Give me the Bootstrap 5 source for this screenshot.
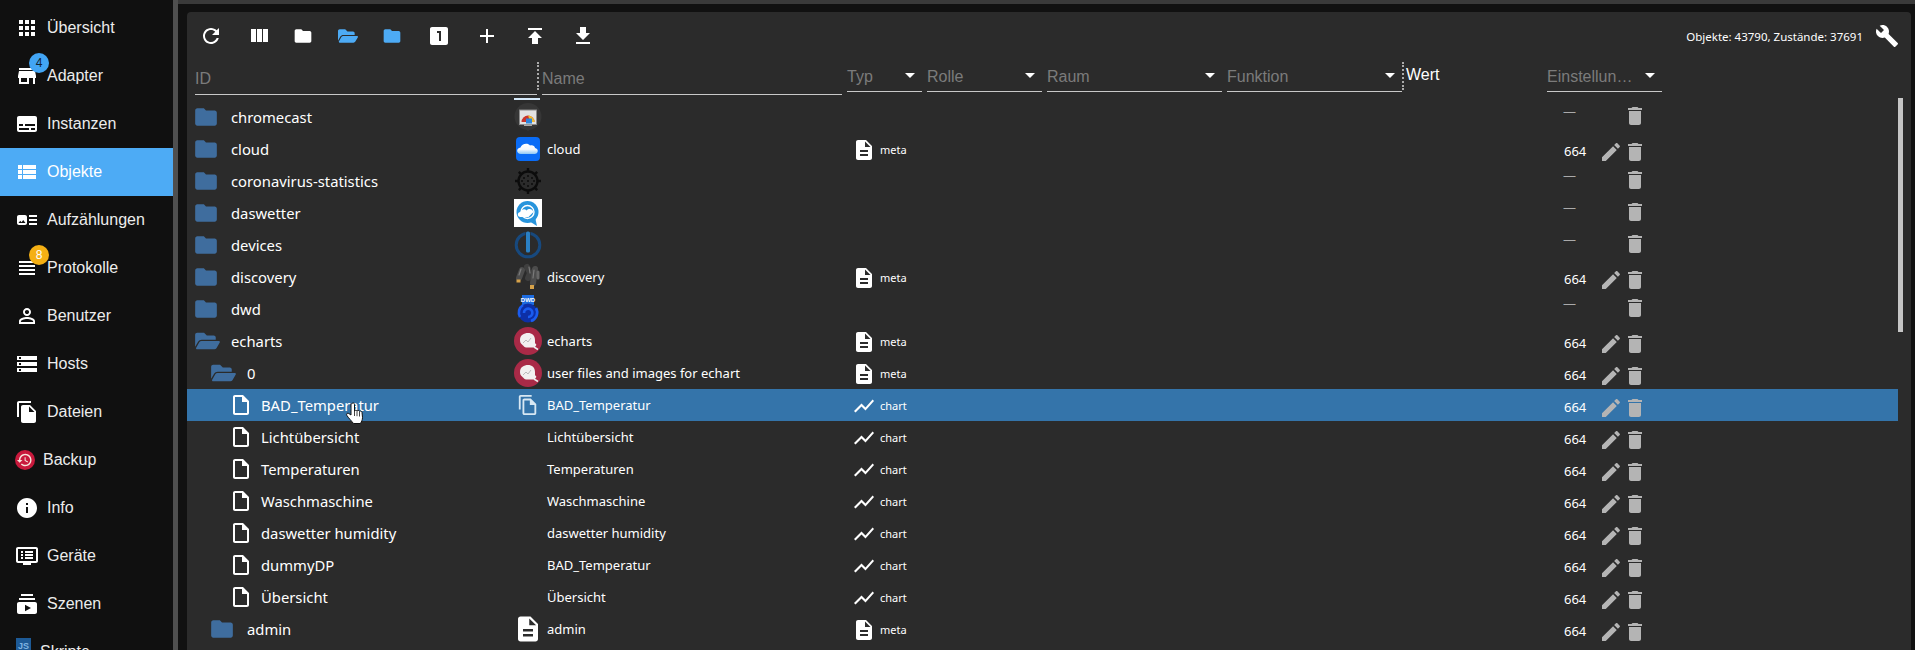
<!DOCTYPE html>
<html lang="de">
<head>
<meta charset="utf-8">
<title>Objekte</title>
<link href="https://cdn.jsdelivr.net/npm/bootstrap@5.3.0/dist/css/bootstrap.min.css" rel="stylesheet">
<style>
html,body{height:650px;overflow:hidden;background:#111;margin:0}
svg{fill:currentColor;flex:none;display:block}
.shell{height:650px;width:1915px;overflow:hidden}
.side{width:173px;flex:none;background:#101010;padding-top:4px;height:650px;overflow:hidden}
.divider{width:5px;flex:none;background:#4f4f4f}
.side-item{height:48px;flex:none;padding:0 0 0 15px;color:#ececec;font:16px "Liberation Sans",Arial,sans-serif;position:relative}
.side-item:hover{color:#ececec}
.side-item svg{width:24px;height:24px;color:#fff;margin-right:8px}
.side-item.active-item{background:#4dabf5;color:#fff}
.side-item.bk svg{width:20px;height:20px;margin:0 8px 0 0}
.side-item.js svg{margin-left:1px;width:15px;height:24px;margin-right:9px;margin-top:-4px}
.pill{position:absolute;left:29px;top:1px;width:20px;height:20px;border-radius:50%;font:12px "Liberation Sans",Arial,sans-serif;display:flex;align-items:center;justify-content:center}
.pill-blue{background:#42a5f5;color:#123}
.pill-amber{background:#f5b014;color:#fff}
.work{flex:1;min-width:0;background:#111}
.topbar{height:4px;background:#3a3a3a}
.sheet{margin:8px 4px 0 9px;background:#2b2b2b;border-radius:4px 4px 0 0;height:638px;overflow:hidden}
.tools{height:48px;color:#fff}
.tbtn{width:48px;height:48px;padding:0;border:0;color:#fff;background:none;display:flex;align-items:center;justify-content:center}
.tbtn svg{width:24px;height:24px}
.tbtn.fold{width:44px}
.tbtn.fold svg{width:20px;height:20px}
.fb{margin-left:-2px}
.fm{width:45px!important}
.fl{width:43px!important;margin-right:2px}
.blue{color:#4dabf5!important}
.count{font:11.5px "Noto Sans",sans-serif;color:#fff;margin-right:12px}
.wrench{width:24px;height:24px;margin-right:12px;color:#fff}
.heads{height:38px;padding-left:8px;font:16px "Liberation Sans",Arial,sans-serif;color:#7b7b7b}
.fld{height:35px;border-bottom:1px solid #c8c8c8;padding-top:4px;flex:none}
.sel{height:32px;border-bottom:1px solid #c8c8c8;padding-top:3px;flex:none;margin-left:5px}
.sel svg{width:24px;height:24px;color:#fff;margin-top:-5px}
.sep{width:0;height:28px;border-left:2px dotted #aaa;flex:none;margin-top:2px}
.f-id{width:342px}
.f-name{width:300px;margin-left:3px}
.f-typ{width:75px}
.f-rolle{width:115px}
.f-wide{width:175px}
.wert{color:#fff;width:141px;margin-left:2px;padding-top:6px;flex:none}
.f-set{width:115px;margin-left:0}
.listwrap{height:552px}
.listing{width:1711px;flex:none;overflow:hidden}
.stub{height:3px;padding-left:327px}
.stub i{display:block;width:26px;height:2px;background:#d5e9fa}
.trow{height:32px;position:relative;color:#fff}
.trow.picked{background:#3474aa}
.idcell{width:327px;flex:none;font:14.8px "Noto Sans",sans-serif}
.lv0{padding-left:6px}
.lv1{padding-left:22px}
.lv2{padding-left:42px}
.idcell .ifold{width:26px;height:26px;color:#3f6d9e;margin-right:12px}
.idcell .iopen{width:25px;height:22px;color:#3f6d9e;margin-left:2px;margin-right:11px}
.idcell .ifile{width:24px;height:24px;margin-right:8px}
.oic{width:33px;flex:none}
.oic svg{width:28px;height:28px}
.oic svg.cp{width:22px;height:22px;margin-left:3px;color:#d8e8f3}
.oic svg.bigdoc{width:30px;height:30px;margin-left:-1px}
.nm{width:305px;flex:none;font:13px "Noto Sans",sans-serif}
.tp{font:11px "Noto Sans",sans-serif;padding-top:1px}
.tp svg{width:24px;height:24px;margin-right:4px;margin-top:1px}
.acts{width:334px;flex:none;font:13px "Noto Sans",sans-serif}
.acts svg{width:24px;height:24px;color:#b4b4b4}
.withnum{padding-top:6px}
.numv{width:35px;margin-top:-2px}
.nodash{padding-bottom:2px}
.dashv{width:35px;color:#aaa;margin-top:-10px;margin-left:-1px;margin-right:25px}
.thumbcol{width:5px;height:234px;background:#c6c6c6;flex:none}
.hand{position:absolute;left:158px;top:13px;width:20px;height:23px}
</style>
</head>
<body>
<svg width="0" height="0" class="position-absolute">
<defs>
<symbol id="i-apps" viewBox="0 0 24 24"><path d="M4 8h4V4H4v4zm6 12h4v-4h-4v4zm-6 0h4v-4H4v4zm0-6h4v-4H4v4zm6 0h4v-4h-4v4zm6-10v4h4V4h-4zm-6 4h4V4h-4v4zm6 6h4v-4h-4v4zm0 6h4v-4h-4v4z"/></symbol>
<symbol id="i-store" viewBox="0 0 24 24"><path d="M20 4H4v2h16V4zm1 10v-2l-1-5H4l-1 5v2h1v6h10v-6h4v6h2v-6h1zm-9 4H6v-4h6v4z"/></symbol>
<symbol id="i-subs" viewBox="0 0 24 24"><path d="M20 4H4c-1.1 0-2 .9-2 2v12c0 1.1.9 2 2 2h16c1.1 0 2-.9 2-2V6c0-1.1-.9-2-2-2zM4 12h4v2H4v-2zm10 6H4v-2h10v2zm6 0h-4v-2h4v2zm0-4H10v-2h10v2z"/></symbol>
<symbol id="i-list" viewBox="0 0 24 24"><path d="M3 14h4v-4H3v4zm0 5h4v-4H3v4zM3 9h4V5H3v4zm5 5h13v-4H8v4zm0 5h13v-4H8v4zM8 5v4h13V5H8z"/></symbol>
<symbol id="i-art" viewBox="0 0 24 24"><path d="M22 13h-8v-2h8v2zm0-6h-8v2h8V7zm-8 10h8v-2h-8v2zm-2-8v6c0 1.1-.9 2-2 2H4c-1.1 0-2-.9-2-2V9c0-1.1.9-2 2-2h6c1.1 0 2 .9 2 2zm-1.5 6l-2.25-3-1.75 2.26-1.25-1.51L3.5 15h7z"/></symbol>
<symbol id="i-head" viewBox="0 0 24 24"><path d="M4 15h16v-2H4v2zm0 4h16v-2H4v2zm0-8h16V9H4v2zm0-6v2h16V5H4z"/></symbol>
<symbol id="i-person" viewBox="0 0 24 24"><path d="M12 5.9c1.16 0 2.1.94 2.1 2.1s-.94 2.1-2.1 2.1S9.9 9.16 9.9 8s.94-2.1 2.1-2.1m0 9c2.97 0 6.1 1.46 6.1 2.1v1.1H5.9V17c0-.64 3.13-2.1 6.1-2.1M12 4C9.79 4 8 5.79 8 8s1.79 4 4 4 4-1.79 4-4-1.79-4-4-4zm0 9c-2.67 0-8 1.34-8 4v3h16v-3c0-2.66-5.33-4-8-4z"/></symbol>
<symbol id="i-storage" viewBox="0 0 24 24"><path d="M2 20h20v-4H2v4zm2-3h2v2H4v-2zM2 4v4h20V4H2zm4 3H4V5h2v2zm-4 7h20v-4H2v4zm2-3h2v2H4v-2z"/></symbol>
<symbol id="i-copy" viewBox="0 0 24 24"><path d="M16 1H4c-1.1 0-2 .9-2 2v14h2V3h12V1zm-1 4l6 6v10c0 1.1-.9 2-2 2H7.99C6.89 23 6 22.1 6 21l.01-14c0-1.1.89-2 1.99-2h7zm-1 7h5.5L14 6.5V12z"/></symbol>
<symbol id="i-copyo" viewBox="0 0 24 24"><path d="M16 1H4c-1.1 0-2 .9-2 2v14h2V3h12V1zm-1 4H8c-1.1 0-1.99.9-1.99 2L6 21c0 1.1.89 2 1.99 2H19c1.1 0 2-.9 2-2V11l-6-6zM8 21V7h6v5h5v9H8z"/></symbol>
<symbol id="i-info" viewBox="0 0 24 24"><path d="M12 2C6.48 2 2 6.48 2 12s4.48 10 10 10 10-4.48 10-10S17.52 2 12 2zm1 15h-2v-6h2v6zm0-8h-2V7h2v2z"/></symbol>
<symbol id="i-dev" viewBox="0 0 24 24"><path fill-rule="evenodd" d="M3 3h18c1.1 0 2 .9 2 2v12c0 1.1-.9 2-2 2h-5v2H8v-2H3c-1.1 0-2-.9-2-2V5c0-1.1.9-2 2-2zm0 2v12h18V5H3zm3 2h2v2H6V7zm4 0h8v2h-8V7zm-4 3h2v2H6v-2zm4 0h8v2h-8v-2zm-4 3h2v2H6v-2zm4 0h8v2h-8v-2z"/></symbol>
<symbol id="i-scene" viewBox="0 0 24 24"><path d="M20 8H4V6h16v2zm-2-6H6v2h12V2zm4 10v8c0 1.1-.9 2-2 2H4c-1.1 0-2-.9-2-2v-8c0-1.1.9-2 2-2h16c1.1 0 2 .9 2 2zm-6 4l-6-3.27v6.53L16 16z"/></symbol>
<symbol id="i-refresh" viewBox="0 0 24 24"><path d="M17.65 6.35C16.2 4.9 14.21 4 12 4c-4.42 0-7.99 3.58-7.99 8s3.57 8 7.99 8c3.73 0 6.84-2.55 7.73-6h-2.08c-.82 2.33-3.04 4-5.65 4-3.31 0-6-2.69-6-6s2.69-6 6-6c1.66 0 3.14.69 4.22 1.78L13 11h7V4l-2.35 2.35z"/></symbol>
<symbol id="i-cols" viewBox="0 0 24 24"><path d="M10 18h5V5h-5v13zm-6 0h5V5H4v13zM16 5v13h5V5h-5z"/></symbol>
<symbol id="i-folder" viewBox="0 0 24 24"><path d="M10 4H4c-1.1 0-1.99.9-1.99 2L2 18c0 1.1.9 2 2 2h16c1.1 0 2-.9 2-2V8c0-1.1-.9-2-2-2h-8l-2-2z"/></symbol>
<symbol id="i-open" viewBox="0 0 576 512"><path d="M572.694 292.093L500.27 416.248A63.997 63.997 0 0 1 444.989 448H45.025c-18.523 0-30.064-20.093-20.731-36.093l72.424-124.155A64 64 0 0 1 152 256h399.964c18.523 0 30.064 20.093 20.73 36.093zM152 224h328v-48c0-26.51-21.49-48-48-48H272l-64-64H48C21.49 64 0 85.49 0 112v278.046l69.077-118.418C86.214 242.25 117.989 224 152 224z"/></symbol>
<symbol id="i-one" viewBox="0 0 24 24"><path d="M19 3H5c-1.1 0-2 .9-2 2v14c0 1.1.9 2 2 2h14c1.1 0 2-.9 2-2V5c0-1.1-.9-2-2-2zm-5 14h-2V9h-2V7h4v10z"/></symbol>
<symbol id="i-add" viewBox="0 0 24 24"><path d="M19 13h-6v6h-2v-6H5v-2h6V5h2v6h6v2z"/></symbol>
<symbol id="i-up" viewBox="0 0 24 24"><path d="M5 4v2h14V4H5zm0 10h4v6h6v-6h4l-7-7-7 7z"/></symbol>
<symbol id="i-down" viewBox="0 0 24 24"><path d="M19 9h-4V3H9v6H5l7 7 7-7zM5 18v2h14v-2H5z"/></symbol>
<symbol id="i-wrench" viewBox="0 0 24 24"><path d="M22.7 19l-9.1-9.1c.9-2.3.4-5-1.5-6.9-2-2-5-2.4-7.4-1.3L9 6 6 9 1.6 4.7C.4 7.1.9 10.1 2.9 12.1c1.9 1.9 4.6 2.4 6.9 1.5l9.1 9.1c.4.4 1 .4 1.4 0l2.3-2.3c.5-.4.5-1.1.1-1.4z"/></symbol>
<symbol id="i-edit" viewBox="0 0 24 24"><path d="M3 17.25V21h3.75L17.81 9.94l-3.75-3.75L3 17.25zM20.71 7.04c.39-.39.39-1.02 0-1.41l-2.34-2.34c-.39-.39-1.02-.39-1.41 0l-1.83 1.83 3.75 3.75 1.83-1.83z"/></symbol>
<symbol id="i-del" viewBox="0 0 24 24"><path d="M6 19c0 1.1.9 2 2 2h8c1.1 0 2-.9 2-2V7H6v12zM19 4h-3.5l-1-1h-5l-1 1H5v2h14V4z"/></symbol>
<symbol id="i-doc" viewBox="0 0 24 24"><path d="M14 2H6c-1.1 0-1.99.9-1.99 2L4 20c0 1.1.89 2 1.99 2H18c1.1 0 2-.9 2-2V8l-6-6zm2 16H8v-2h8v2zm0-4H8v-2h8v2zm-3-5V3.5L18.5 9H13z"/></symbol>
<symbol id="i-file" viewBox="0 0 24 24"><path d="M14 2H6c-1.1 0-1.99.9-1.99 2L4 20c0 1.1.89 2 1.99 2H18c1.1 0 2-.9 2-2V8l-6-6zM6 20V4h7v5h5v11H6z"/></symbol>
<symbol id="i-chart" viewBox="0 0 24 24"><path d="M3.5 18.49l6-6.01 4 4L22 6.92l-1.41-1.41-7.09 7.97-4-4L2 16.99z"/></symbol>
<symbol id="i-drop" viewBox="0 0 24 24"><path d="M7 10l5 5 5-5z"/></symbol>
<symbol id="i-history" viewBox="0 0 24 24"><path d="M13 3c-4.97 0-9 4.03-9 9H1l3.89 3.89.07.14L9 12H6c0-3.87 3.13-7 7-7s7 3.13 7 7-3.13 7-7 7c-1.93 0-3.68-.79-4.94-2.06l-1.42 1.42C8.27 19.99 10.51 21 13 21c4.97 0 9-4.03 9-9s-4.03-9-9-9zm-1 5v5l4.28 2.54.72-1.21-3.5-2.08V8H12z"/></symbol>
<linearGradient id="gc" x1="0" y1="0" x2="0" y2="1"><stop offset="0" stop-color="#fff"/><stop offset=".55" stop-color="#f4f8fc"/><stop offset="1" stop-color="#8ec8f5"/></linearGradient>
<symbol id="o-cast" viewBox="0 0 28 28"><circle cx="14" cy="13.5" r="13.5" fill="#363636"/><path d="M6 22l8 6 8-6z" fill="#363636"/><rect x="5.500" y="7" width="17" height="14.500" fill="#e2e2e2" stroke="#8a8a8a"/><path d="M7.500 19a6.500 6.500 0 0 1 13 0z" fill="#c9362c"/><path d="M14 12.500a6.500 6.500 0 0 1 6.500 6.500h-4z" fill="#f1bd2e"/><rect x="12" y="15.500" width="6" height="5" fill="#2f86dc"/><rect x="10" y="21.500" width="8" height="1.500" fill="#aaa"/></symbol>
<symbol id="o-cloud" viewBox="0 0 28 28"><rect x="2" y="2" width="24" height="24" rx="4" fill="#0a6cf6"/><path d="M7 19c-5 0-5-6-.5-6.500C7.500 8.500 14 7.500 16 10.500c3-1 5 1 5 2.500 4 .5 3.500 6-.5 6z" fill="url(#gc)"/></symbol>
<symbol id="o-corona" viewBox="0 0 28 28"><g stroke="#0c0c0c" stroke-width="2.400" fill="none"><circle cx="14" cy="14" r="9.500"/><path d="M14 1v4M14 23v4M1 14h4M23 14h4M4.800 4.800l2.800 2.800M20.400 20.400l2.800 2.800M4.800 23.200l2.800-2.800M20.400 7.600l2.800-2.800"/></g><g fill="#0c0c0c"><circle cx="14" cy="14" r="1"/><circle cx="10" cy="11" r="1"/><circle cx="18" cy="11" r="1"/><circle cx="10" cy="17" r="1"/><circle cx="18" cy="17" r="1"/><circle cx="14" cy="9" r="1"/><circle cx="14" cy="19" r="1"/><circle cx="8" cy="14" r="1"/><circle cx="20" cy="14" r="1"/></g></symbol>
<symbol id="o-wetter" viewBox="0 0 28 28"><rect width="28" height="28" fill="#fff"/><circle cx="13.500" cy="13" r="11" fill="#2794dc"/><path d="M15 22l8 5-2-9z" fill="#2794dc"/><circle cx="13.500" cy="13" r="7.200" fill="#fff"/><circle cx="13.500" cy="13" r="5.800" fill="#2794dc"/><path d="M6.500 18c-3.500 0-3.500-5 0-5 1-3 4.500-3.500 6-1.500 2.500-2.500 6-1.500 7 1.500l-5 5z" fill="#fff"/></symbol>
<symbol id="o-iob" viewBox="0 0 28 28"><circle cx="14" cy="14" r="11.800" fill="none" stroke="#17497e" stroke-width="3"/><rect x="11.500" y="0" width="5" height="4.500" fill="#2b2b2b"/><rect x="12" y="0.500" width="4" height="21" rx="1.500" fill="#2a80c4"/></symbol>
<symbol id="o-bino" viewBox="0 0 28 28"><g fill="none" stroke-linecap="round"><path d="M8 7L5 15" stroke="#4c4c4c" stroke-width="6"/><path d="M13 4l3 6-2 5" stroke="#3f3f3f" stroke-width="6"/><path d="M21 6l-2 14" stroke="#4c4c4c" stroke-width="6"/><path d="M24 9v6" stroke="#666" stroke-width="3"/><path d="M7 6L5 12M15 4l1 6M20 7l-1 8" stroke="#7a7a7a" stroke-width="1.200"/></g><rect x="2.500" y="16.500" width="4" height="3" fill="#d6a24a"/><rect x="16" y="22" width="4" height="4" fill="#d6a24a"/></symbol>
<symbol id="o-dwd" viewBox="0 0 28 28"><rect x="8" y="0" width="12" height="10" fill="#1d6ce0"/><text x="14" y="7" text-anchor="middle" font-family="Liberation Sans,sans-serif" font-size="6" font-weight="700" fill="#fff">DWD</text><circle cx="14" cy="18" r="9.500" fill="#0d2fa6"/><g fill="none" stroke="#1a5cf0" stroke-width="2.600"><path d="M6 22a9 9 0 0 1 3-12"/><path d="M22 13a9 9 0 0 1-5 13"/><path d="M10 18a4.200 4.200 0 1 1 4 4"/></g></symbol>
<symbol id="o-echart" viewBox="0 0 28 28"><circle cx="14" cy="14" r="14" fill="#a92a47"/><path d="M6 13c0-5 4-7 8-7s7 2.500 7 7 0 3 1 4-1 4-4 3.500-6.500 1-8-1-4-2.500-4-6.500z" fill="#f2f0f0"/><path d="M9 16l3-3 2 2 3-4" fill="none" stroke="#bbb" stroke-width="1"/><path d="M20 20l4 2.500" stroke="#eee" stroke-width="1.500"/></symbol>
<symbol id="o-js" viewBox="0 0 15 24"><rect width="15" height="24" fill="#1d5a96"/><text x="7.500" y="11" text-anchor="middle" font-family="Liberation Sans,sans-serif" font-size="9" font-weight="700" fill="#7fb4e2">JS</text></symbol>
</defs>
</svg>

<div class="shell d-flex">
  <nav class="side nav flex-column flex-nowrap">
    <a class="side-item nav-link d-flex align-items-center"><svg><use href="#i-apps"/></svg>Übersicht</a>
    <a class="side-item nav-link d-flex align-items-center"><svg><use href="#i-store"/></svg>Adapter<span class="pill pill-blue">4</span></a>
    <a class="side-item nav-link d-flex align-items-center"><svg><use href="#i-subs"/></svg>Instanzen</a>
    <a class="side-item active-item nav-link d-flex align-items-center"><svg><use href="#i-list"/></svg>Objekte</a>
    <a class="side-item nav-link d-flex align-items-center"><svg><use href="#i-art"/></svg>Aufzählungen</a>
    <a class="side-item nav-link d-flex align-items-center"><svg><use href="#i-head"/></svg>Protokolle<span class="pill pill-amber">8</span></a>
    <a class="side-item nav-link d-flex align-items-center"><svg><use href="#i-person"/></svg>Benutzer</a>
    <a class="side-item nav-link d-flex align-items-center"><svg><use href="#i-storage"/></svg>Hosts</a>
    <a class="side-item nav-link d-flex align-items-center"><svg><use href="#i-copy"/></svg>Dateien</a>
    <a class="side-item bk nav-link d-flex align-items-center"><svg viewBox="0 0 24 24"><circle cx="12" cy="12" r="12" fill="#c8193c"/><svg x="1.500" y="2" width="20" height="20" style="color:#f6e6dc"><use href="#i-history"/></svg></svg>Backup</a>
    <a class="side-item nav-link d-flex align-items-center"><svg><use href="#i-info"/></svg>Info</a>
    <a class="side-item nav-link d-flex align-items-center"><svg><use href="#i-dev"/></svg>Geräte</a>
    <a class="side-item nav-link d-flex align-items-center"><svg><use href="#i-scene"/></svg>Szenen</a>
    <a class="side-item js nav-link d-flex align-items-center"><svg><use href="#o-js"/></svg>Skripte</a>
  </nav>
  <div class="divider"></div>
  <main class="work">
    <div class="topbar"></div>
    <div class="sheet">
      <div class="tools d-flex align-items-center">
        <button class="tbtn"><svg><use href="#i-refresh"/></svg></button>
        <button class="tbtn"><svg><use href="#i-cols"/></svg></button>
        <button class="tbtn fold fb"><svg><use href="#i-folder"/></svg></button>
        <button class="tbtn fold fm blue"><svg><use href="#i-open"/></svg></button>
        <button class="tbtn fold fl blue"><svg><use href="#i-folder"/></svg></button>
        <button class="tbtn"><svg><use href="#i-one"/></svg></button>
        <button class="tbtn"><svg><use href="#i-add"/></svg></button>
        <button class="tbtn"><svg><use href="#i-up"/></svg></button>
        <button class="tbtn"><svg><use href="#i-down"/></svg></button>
        <div class="flex-grow-1"></div>
        <span class="count">Objekte: 43790, Zustände: 37691</span>
        <svg class="wrench"><use href="#i-wrench"/></svg>
      </div>
      <div class="heads d-flex align-items-start">
        <div class="fld f-id d-flex align-items-center">ID</div>
        <div class="sep"></div>
        <div class="fld f-name d-flex align-items-center">Name</div>
        <div class="sel f-typ d-flex align-items-center justify-content-between">Typ<svg><use href="#i-drop"/></svg></div>
        <div class="sel f-rolle d-flex align-items-center justify-content-between">Rolle<svg><use href="#i-drop"/></svg></div>
        <div class="sel f-wide d-flex align-items-center justify-content-between">Raum<svg><use href="#i-drop"/></svg></div>
        <div class="sel f-wide d-flex align-items-center justify-content-between">Funktion<svg><use href="#i-drop"/></svg></div>
        <div class="sep"></div>
        <div class="wert">Wert</div>
        <div class="sel f-set d-flex align-items-center justify-content-between">Einstellun…<svg><use href="#i-drop"/></svg></div>
      </div>
      <div class="listwrap d-flex">
        <div class="listing">
          <div class="stub"><i></i></div>

          <div class="trow d-flex align-items-center"><div class="idcell lv0 d-flex align-items-center"><svg class="ifold"><use href="#i-folder"/></svg>chromecast</div><div class="oic"><svg><use href="#o-cast"/></svg></div><div class="nm"></div><div class="tp flex-grow-1"></div><div class="acts d-flex align-items-center nodash"><span class="dashv">—</span><svg><use href="#i-del"/></svg></div></div>

          <div class="trow d-flex align-items-center"><div class="idcell lv0 d-flex align-items-center"><svg class="ifold"><use href="#i-folder"/></svg>cloud</div><div class="oic"><svg><use href="#o-cloud"/></svg></div><div class="nm">cloud</div><div class="tp flex-grow-1 d-flex align-items-center"><svg><use href="#i-doc"/></svg>meta</div><div class="acts d-flex align-items-center withnum"><span class="numv">664</span><svg><use href="#i-edit"/></svg><svg><use href="#i-del"/></svg></div></div>

          <div class="trow d-flex align-items-center"><div class="idcell lv0 d-flex align-items-center"><svg class="ifold"><use href="#i-folder"/></svg>coronavirus-statistics</div><div class="oic"><svg><use href="#o-corona"/></svg></div><div class="nm"></div><div class="tp flex-grow-1"></div><div class="acts d-flex align-items-center nodash"><span class="dashv">—</span><svg><use href="#i-del"/></svg></div></div>

          <div class="trow d-flex align-items-center"><div class="idcell lv0 d-flex align-items-center"><svg class="ifold"><use href="#i-folder"/></svg>daswetter</div><div class="oic"><svg><use href="#o-wetter"/></svg></div><div class="nm"></div><div class="tp flex-grow-1"></div><div class="acts d-flex align-items-center nodash"><span class="dashv">—</span><svg><use href="#i-del"/></svg></div></div>

          <div class="trow d-flex align-items-center"><div class="idcell lv0 d-flex align-items-center"><svg class="ifold"><use href="#i-folder"/></svg>devices</div><div class="oic"><svg><use href="#o-iob"/></svg></div><div class="nm"></div><div class="tp flex-grow-1"></div><div class="acts d-flex align-items-center nodash"><span class="dashv">—</span><svg><use href="#i-del"/></svg></div></div>

          <div class="trow d-flex align-items-center"><div class="idcell lv0 d-flex align-items-center"><svg class="ifold"><use href="#i-folder"/></svg>discovery</div><div class="oic"><svg><use href="#o-bino"/></svg></div><div class="nm">discovery</div><div class="tp flex-grow-1 d-flex align-items-center"><svg><use href="#i-doc"/></svg>meta</div><div class="acts d-flex align-items-center withnum"><span class="numv">664</span><svg><use href="#i-edit"/></svg><svg><use href="#i-del"/></svg></div></div>

          <div class="trow d-flex align-items-center"><div class="idcell lv0 d-flex align-items-center"><svg class="ifold"><use href="#i-folder"/></svg>dwd</div><div class="oic"><svg><use href="#o-dwd"/></svg></div><div class="nm"></div><div class="tp flex-grow-1"></div><div class="acts d-flex align-items-center nodash"><span class="dashv">—</span><svg><use href="#i-del"/></svg></div></div>

          <div class="trow d-flex align-items-center"><div class="idcell lv0 d-flex align-items-center"><svg class="iopen"><use href="#i-open"/></svg>echarts</div><div class="oic"><svg><use href="#o-echart"/></svg></div><div class="nm">echarts</div><div class="tp flex-grow-1 d-flex align-items-center"><svg><use href="#i-doc"/></svg>meta</div><div class="acts d-flex align-items-center withnum"><span class="numv">664</span><svg><use href="#i-edit"/></svg><svg><use href="#i-del"/></svg></div></div>

          <div class="trow d-flex align-items-center"><div class="idcell lv1 d-flex align-items-center"><svg class="iopen"><use href="#i-open"/></svg>0</div><div class="oic"><svg><use href="#o-echart"/></svg></div><div class="nm">user files and images for echart</div><div class="tp flex-grow-1 d-flex align-items-center"><svg><use href="#i-doc"/></svg>meta</div><div class="acts d-flex align-items-center withnum"><span class="numv">664</span><svg><use href="#i-edit"/></svg><svg><use href="#i-del"/></svg></div></div>

          <div class="trow picked d-flex align-items-center"><div class="idcell lv2 d-flex align-items-center"><svg class="ifile"><use href="#i-file"/></svg>BAD_Temperatur</div><div class="oic"><svg class="cp"><use href="#i-copyo"/></svg></div><div class="nm">BAD_Temperatur</div><div class="tp flex-grow-1 d-flex align-items-center"><svg><use href="#i-chart"/></svg>chart</div><div class="acts d-flex align-items-center withnum"><span class="numv">664</span><svg><use href="#i-edit"/></svg><svg><use href="#i-del"/></svg></div>
            <svg class="hand" viewBox="0 0 20 23"><path d="M7 1.500c1-1 2.500-.5 2.500 1V9c1-1 2-1 2.500 0 1-.8 2-.7 2.500.3 1-.6 2.200-.2 2.500 1l.5 5c0 3-1 4-2 6.200H8.500C7 19.500 3 15.500 1.800 13.300c-.8-1.500.8-2.800 2-1.800L6 13V2.500c0-.4.500-.8 1-1z" fill="#fff" stroke="#111" stroke-width="1"/><path d="M9.500 9v5M12 9.200v5M14.500 9.500v5" stroke="#111" stroke-width=".8" fill="none"/></svg>
          </div>

          <div class="trow d-flex align-items-center"><div class="idcell lv2 d-flex align-items-center"><svg class="ifile"><use href="#i-file"/></svg>Lichtübersicht</div><div class="oic"></div><div class="nm">Lichtübersicht</div><div class="tp flex-grow-1 d-flex align-items-center"><svg><use href="#i-chart"/></svg>chart</div><div class="acts d-flex align-items-center withnum"><span class="numv">664</span><svg><use href="#i-edit"/></svg><svg><use href="#i-del"/></svg></div></div>

          <div class="trow d-flex align-items-center"><div class="idcell lv2 d-flex align-items-center"><svg class="ifile"><use href="#i-file"/></svg>Temperaturen</div><div class="oic"></div><div class="nm">Temperaturen</div><div class="tp flex-grow-1 d-flex align-items-center"><svg><use href="#i-chart"/></svg>chart</div><div class="acts d-flex align-items-center withnum"><span class="numv">664</span><svg><use href="#i-edit"/></svg><svg><use href="#i-del"/></svg></div></div>

          <div class="trow d-flex align-items-center"><div class="idcell lv2 d-flex align-items-center"><svg class="ifile"><use href="#i-file"/></svg>Waschmaschine</div><div class="oic"></div><div class="nm">Waschmaschine</div><div class="tp flex-grow-1 d-flex align-items-center"><svg><use href="#i-chart"/></svg>chart</div><div class="acts d-flex align-items-center withnum"><span class="numv">664</span><svg><use href="#i-edit"/></svg><svg><use href="#i-del"/></svg></div></div>

          <div class="trow d-flex align-items-center"><div class="idcell lv2 d-flex align-items-center"><svg class="ifile"><use href="#i-file"/></svg>daswetter humidity</div><div class="oic"></div><div class="nm">daswetter humidity</div><div class="tp flex-grow-1 d-flex align-items-center"><svg><use href="#i-chart"/></svg>chart</div><div class="acts d-flex align-items-center withnum"><span class="numv">664</span><svg><use href="#i-edit"/></svg><svg><use href="#i-del"/></svg></div></div>

          <div class="trow d-flex align-items-center"><div class="idcell lv2 d-flex align-items-center"><svg class="ifile"><use href="#i-file"/></svg>dummyDP</div><div class="oic"></div><div class="nm">BAD_Temperatur</div><div class="tp flex-grow-1 d-flex align-items-center"><svg><use href="#i-chart"/></svg>chart</div><div class="acts d-flex align-items-center withnum"><span class="numv">664</span><svg><use href="#i-edit"/></svg><svg><use href="#i-del"/></svg></div></div>

          <div class="trow d-flex align-items-center"><div class="idcell lv2 d-flex align-items-center"><svg class="ifile"><use href="#i-file"/></svg>Übersicht</div><div class="oic"></div><div class="nm">Übersicht</div><div class="tp flex-grow-1 d-flex align-items-center"><svg><use href="#i-chart"/></svg>chart</div><div class="acts d-flex align-items-center withnum"><span class="numv">664</span><svg><use href="#i-edit"/></svg><svg><use href="#i-del"/></svg></div></div>

          <div class="trow d-flex align-items-center"><div class="idcell lv1 d-flex align-items-center"><svg class="ifold"><use href="#i-folder"/></svg>admin</div><div class="oic"><svg class="bigdoc"><use href="#i-doc"/></svg></div><div class="nm">admin</div><div class="tp flex-grow-1 d-flex align-items-center"><svg><use href="#i-doc"/></svg>meta</div><div class="acts d-flex align-items-center withnum"><span class="numv">664</span><svg><use href="#i-edit"/></svg><svg><use href="#i-del"/></svg></div></div>
        </div>
        <div class="thumbcol"></div>
      </div>
    </div>
  </main>
</div>
<script src="https://cdn.jsdelivr.net/npm/bootstrap@5.3.0/dist/js/bootstrap.bundle.min.js"></script>
</body>
</html>
